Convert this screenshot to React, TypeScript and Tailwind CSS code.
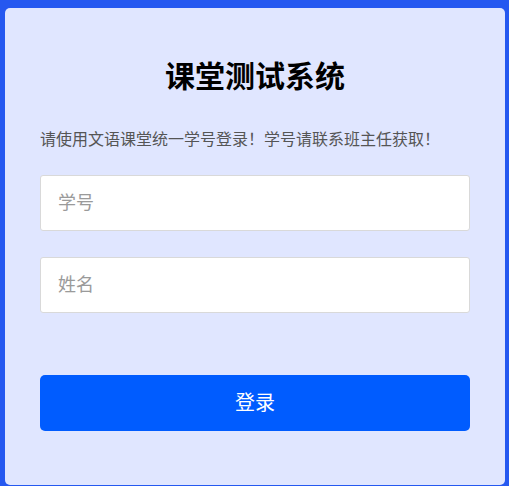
import { useState } from 'react'

const FONT = "font-['Liberation_Sans','Noto_Sans_CJK_SC',sans-serif]"

export default function App() {
  const [studentId, setStudentId] = useState('')
  const [name, setName] = useState('')

  return (
    <div className={`min-h-[486px] w-[509px] bg-[#2558f0] pt-[8px] pb-[1px] px-[4px] ${FONT}`}>
      {/* 登录卡片 */}
      <div className="h-[477px] w-[500px] ml-[1px] rounded-[5px] bg-[#e0e6ff] px-[35px] pt-[49px]">
        <h1 className="text-center text-[30px] leading-[40px] font-bold text-black">课堂测试系统</h1>

        <p className="mt-[31px] text-[16px] leading-[24px] text-[#555]">
          请使用文语课堂统一学号登录！学号请联系班主任获取！
        </p>

        <div className="mt-[23px] flex flex-col gap-[26px]">
          <input
            value={studentId}
            onChange={(e) => setStudentId(e.target.value)}
            placeholder="学号"
            className="h-[56px] w-full rounded-[3px] border border-[#d9d9d9] bg-white px-[17px] text-[18px] text-[#333] outline-none placeholder:text-[#9a9a9a]"
          />
          <input
            value={name}
            onChange={(e) => setName(e.target.value)}
            placeholder="姓名"
            className="h-[56px] w-full rounded-[3px] border border-[#d9d9d9] bg-white px-[17px] text-[18px] text-[#333] outline-none placeholder:text-[#9a9a9a]"
          />
        </div>

        <button className="mt-[62px] h-[56px] w-full rounded-[5px] bg-[#005cff] text-[20px] text-white">
          登录
        </button>
      </div>
    </div>
  )
}
